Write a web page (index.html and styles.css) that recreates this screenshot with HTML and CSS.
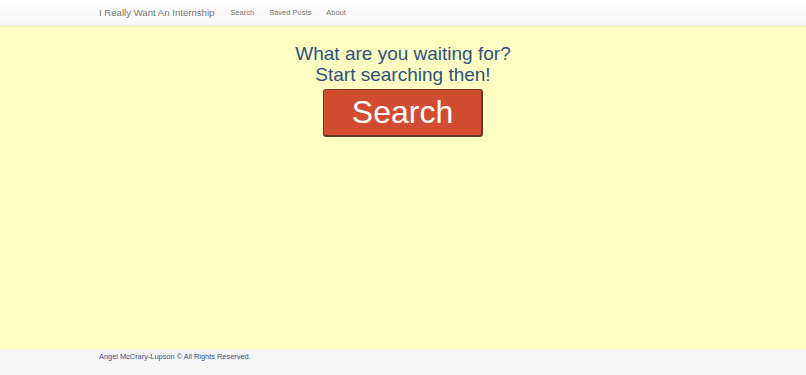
FILE: index.html
```html
<!DOCTYPE html>
<html lang="en">
<head>
  <meta charset="UTF-8">
  <meta name="viewport" content="width=device-width,initial-scale=1">
  <title>I Really Want An Internship</title>
  <link rel="stylesheet" href="styles.css">
</head>
<body>
  <nav class="navbar">
    <div class="container flex flex-align-center">
      <a class="brand" href="#">I Really Want An Internship</a>
      <a class="nav-link" href="#">Search</a>
      <a class="nav-link" href="#">Saved Posts</a>
      <a class="nav-link" href="#">About</a>
    </div>
  </nav>
  <main class="main">
    <h1 class="title">What are you waiting for?<br>Start searching then!</h1>
    <button class="btn-search" type="button">Search</button>
  </main>
  <footer class="footer">
    <div class="container">Angel McCrary-Lupson &copy; All Rights Reserved.</div>
  </footer>
</body>
</html>
```

FILE: styles.css
```css
*{
  margin: 0;
  padding: 0;
  box-sizing: border-box;
}
.flex{display:flex;}
.flex-align-center{align-items:center;}

html,body{
  height: 100%;
}
body{
  display: flex;
  flex-direction: column;
  font-family: "Liberation Sans", Arial, sans-serif;
  background: #ffffc4;
}
.container{
  width: 608px;
  margin: 0 auto;
}
.navbar{
  height: 26px;
  background: linear-gradient(to bottom, #ffffff 0%, #f6f6f6 100%);
  border-bottom: 1px solid #ececec;
  box-shadow: 0 1px 2px rgba(0,0,0,.05);
}
.navbar .container{
  height: 25px;
}
.navbar a{
  text-decoration: none;
  color: #777;
}
.brand{
  font-size: 9.6px;
  margin-right: 16px;
}
.nav-link{
  font-size: 7.5px;
  margin-right: 15px;
}
.main{
  flex: 1;
  text-align: center;
  padding-top: 17px;
}
.title{
  font-weight: normal;
  font-size: 19px;
  line-height: 21px;
  color: #2b5282;
}
.btn-search{
  margin-top: 4px;
  width: 160px;
  height: 48px;
  background: #d24c31;
  color: #fff;
  font-family: "Liberation Sans", Arial, sans-serif;
  font-size: 32px;
  border: 1px solid #6b3a28;
  border-right-width: 2px;
  border-bottom-width: 2px;
  border-radius: 3px;
  outline: 0;
}
.footer{
  height: 26px;
  background: #f5f5f5;
  font-size: 7.4px;
  color: #3b4f84;
  padding-top: 3px;
}
```
